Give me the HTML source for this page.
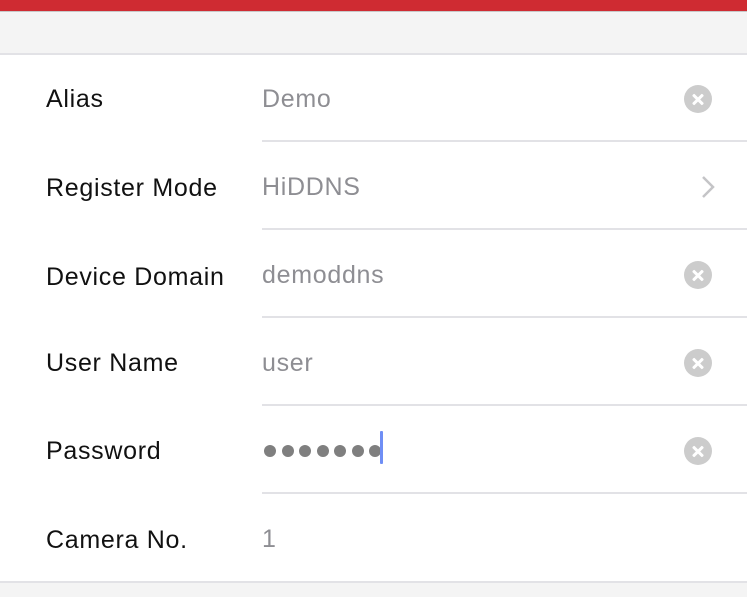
<!DOCTYPE html>
<html><head><style>
body{margin:0;width:747px;height:595px;overflow:hidden;background:#fff;font-family:"Liberation Sans",sans-serif;position:relative}
.red{position:absolute;top:0;left:0;width:747px;height:11px;background:#cf2b32}
.gray{position:absolute;top:11px;left:0;width:747px;height:41px;background:#f4f4f4;border-top:1px solid #c8c8c8;border-bottom:2px solid #e2e2e6}
.lab{position:absolute;left:46px;font-size:25px;letter-spacing:0.7px;color:#111}
.val{position:absolute;left:262px;font-size:25px;letter-spacing:0.7px;color:#8e8e93}
.sep{position:absolute;left:262px;right:0;height:2px;background:#e2e2e6}
.x{position:absolute;left:684px;width:28px;height:28px;border-radius:50%;background:#cccccc}
.x:before,.x:after{content:"";position:absolute;left:7px;top:12.5px;width:14px;height:3px;background:#fff;border-radius:1px;transform:rotate(45deg)}
.x:after{transform:rotate(-45deg)}
.bot{position:absolute;top:581px;left:0;width:747px;height:14px;background:#f4f4f4;border-top:2px solid #e2e2e6}
.dot{display:inline-block;width:12px;height:12px;border-radius:50%;background:#7f7f7f;margin-right:5.5px}
</style></head><body>
<div class="red"></div><div class="gray"></div>
<div class="lab" style="top:85px">Alias</div><div class="val" style="top:85px">Demo</div><div class="x" style="top:85px"></div>
<div class="sep" style="top:140px"></div>
<div class="lab" style="top:174px">Register Mode</div><div class="val" style="top:173px">HiDDNS</div>
<svg style="position:absolute;left:700px;top:175px" width="16" height="24"><path d="M3 2 L13 12 L3 22" fill="none" stroke="#c4c4c7" stroke-width="2.5"/></svg>
<div class="sep" style="top:228px"></div>
<div class="lab" style="top:263px">Device Domain</div><div class="val" style="top:261px">demoddns</div><div class="x" style="top:261px"></div>
<div class="sep" style="top:316px"></div>
<div class="lab" style="top:349px">User Name</div><div class="val" style="top:349px">user</div><div class="x" style="top:349px"></div>
<div class="sep" style="top:404px"></div>
<div class="lab" style="top:437px">Password</div>
<div style="position:absolute;left:264px;top:445px;height:13px;line-height:0">
<span class="dot"></span><span class="dot"></span><span class="dot"></span><span class="dot"></span><span class="dot"></span><span class="dot"></span><span class="dot"></span></div>
<div style="position:absolute;left:380px;top:431px;width:3px;height:33px;background:#6f8ef5;border-radius:1px"></div>
<div class="x" style="top:437px"></div>
<div class="sep" style="top:492px"></div>
<div class="lab" style="top:526px">Camera No.</div><div class="val" style="top:525px">1</div>
<div class="bot"></div>
</body></html>
